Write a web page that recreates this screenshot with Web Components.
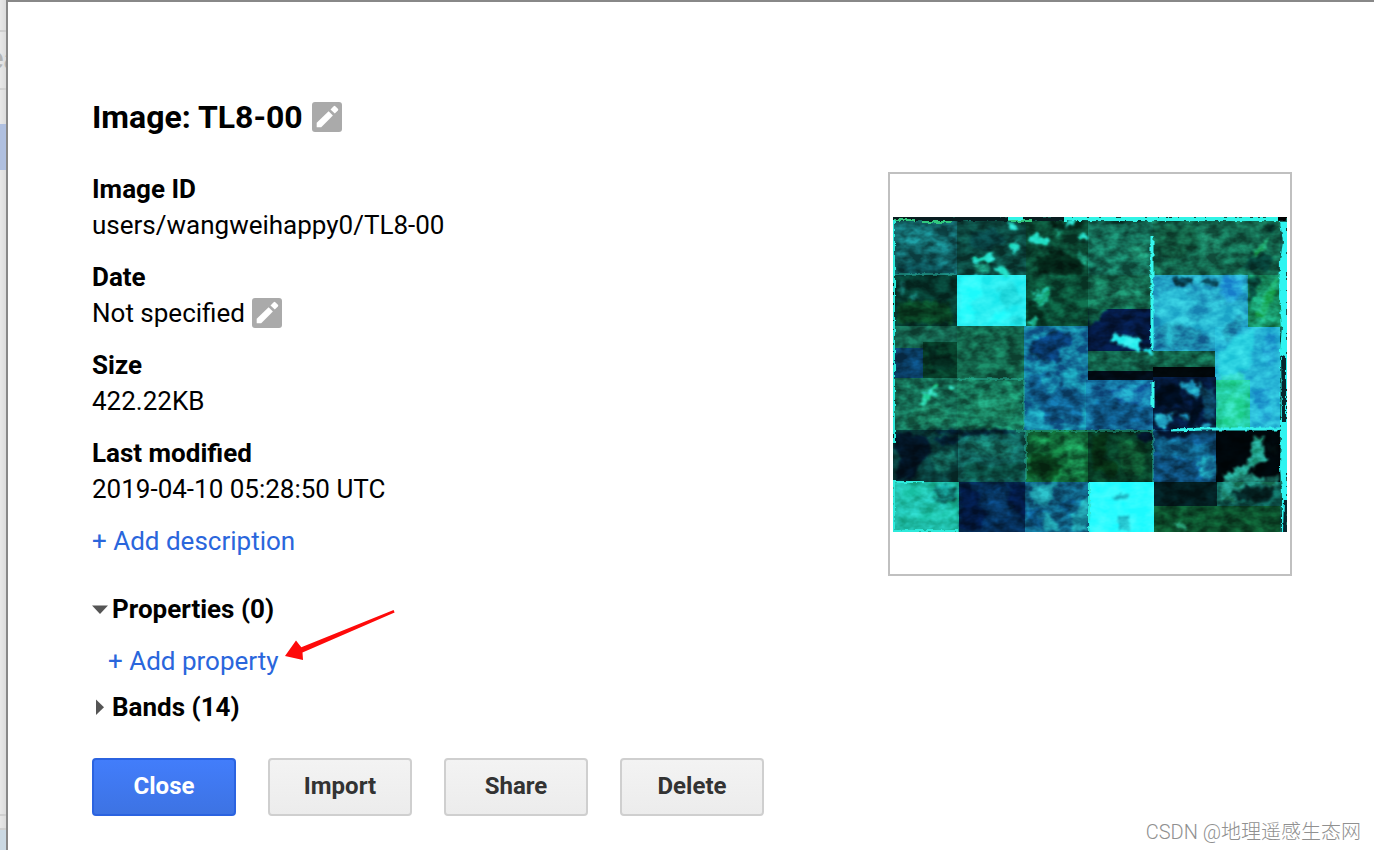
<!DOCTYPE html>
<html lang="en">
<head>
<meta charset="utf-8">
<title>Image: TL8-00</title>
<style>
html, body {
  margin: 0;
  min-height: 100%;
  background: #fff;
}
body {
  font-family: Roboto, "Noto Sans CJK SC", sans-serif;
  font-size: 26px;
  line-height: 36px;
  color: #000;
}
</style>
</head>
<body>
<asset-page>
  <page-backdrop slot="backdrop">ea</page-backdrop>
  <asset-dialog>
    <span slot="title">Image: TL8-00</span>
    <asset-field label="Image ID">users/wangweihappy0/TL8-00</asset-field>
    <asset-field label="Date" editable>Not specified</asset-field>
    <asset-field label="Size">422.22KB</asset-field>
    <asset-field label="Last modified">2019-04-10 05:28:50 UTC</asset-field>
    <add-link>Add description</add-link>
    <tree-section slot="tree" label="Properties (0)" open>
      <add-link>Add property<callout-arrow slot="callout"></callout-arrow></add-link>
    </tree-section>
    <tree-section slot="tree" label="Bands (14)"></tree-section>
    <asset-thumbnail slot="thumbnail"></asset-thumbnail>
    <dialog-button slot="actions" primary>Close</dialog-button>
    <dialog-button slot="actions">Import</dialog-button>
    <dialog-button slot="actions">Share</dialog-button>
    <dialog-button slot="actions">Delete</dialog-button>
  </asset-dialog>
  <page-watermark slot="watermark">CSDN @地理遥感生态网</page-watermark>
</asset-page>

<script>
class BaseElement extends HTMLElement {
  constructor() {
    super()
    const template = document.createElement('template')
    template.innerHTML = this.render()
    this.attachShadow({mode: 'open'})
    this.shadowRoot.appendChild(template.content.cloneNode(true))
  }
}

class AssetPage extends BaseElement {
  render() {
    return /* HTML */`
<style>
:host {
  display: flex;
  position: relative;
  min-height: 100vh;
  overflow: hidden;
}
</style>
<slot name="backdrop"></slot>
<slot></slot>
<slot name="watermark"></slot>`
  }
}

// sliver of the dimmed editor that stays visible left of the dialog
class PageBackdrop extends BaseElement {
  render() {
    return /* HTML */`
<style>
:host {
  display: flex;
  flex-direction: column;
  flex: none;
  width: 6px;
  overflow: hidden;
  background: linear-gradient(90deg, #e8e8e8, #dcdcdc);
  color: #b4b4b4;
  font: bold 32px/52px "Liberation Sans", sans-serif;
}
.bar { height: 30px; border-bottom: 2px solid #cfcfcf; }
.title { height: 56px; margin-left: -14px; border-bottom: 2px solid #d2d2d2; }
.gap { height: 34px; }
.selected { height: 46px; background: #b0c0e0; }
.fill { flex: 1; border-bottom: 2px solid #d0d0d0; }
.foot { height: 12px; }
.status { height: 20px; border-top: 2px solid #d0d0d0; background: #cbd9e3; }
</style>
<div class="bar"></div>
<div class="title"><slot></slot></div>
<div class="gap"></div>
<div class="selected"></div>
<div class="fill"></div>
<div class="foot"></div>
<div class="status"></div>`
  }
}

class AssetDialog extends BaseElement {
  render() {
    return /* HTML */`
<style>
:host {
  display: block;
  flex: 1;
  box-sizing: border-box;
  padding: 93px 82px 32px 84px;
  border: solid #888;
  border-width: 2px 0 0 2px;
  background: #fff;
}
h1 {
  display: flex;
  align-items: center;
  gap: 9px;
  margin: 0 0 32px;
  font-size: 32px;
  line-height: 44px;
}
.main {
  display: flex;
  justify-content: space-between;
  align-items: flex-start;
  gap: 32px;
}
.fields {
  display: flex;
  flex-direction: column;
  align-items: flex-start;
  gap: 16px;
}
.tree {
  display: flex;
  flex-direction: column;
  gap: 10px;
  margin-top: 16px;
}
.actions {
  display: flex;
  gap: 32px;
  margin-top: 33px;
}
</style>
<h1><slot name="title"></slot><edit-button></edit-button></h1>
<div class="main">
  <div class="fields">
    <slot></slot>
    <div class="tree"><slot name="tree"></slot></div>
  </div>
  <slot name="thumbnail"></slot>
</div>
<div class="actions"><slot name="actions"></slot></div>`
  }
}

class EditButton extends BaseElement {
  render() {
    return /* HTML */`
<style>
:host { display: flex; }
button {
  width: 30px;
  height: 30px;
  padding: 0;
  border: none;
  border-radius: 3px;
  background: #aaa;
}
svg { display: block; }
</style>
<button type="button" aria-label="Edit">
  <svg width="30" height="30" viewBox="0 0 30 30" fill="#fff">
    <path d="M4.7 25.2V20.8L16.6 9.2L20.9 13.4L9.2 25.2Z"/>
    <path d="M18.5 7.4L21.7 4.2Q22.5 3.4 23.3 4.2L25.9 6.8Q26.7 7.6 25.9 8.4L22.8 11.6Z"/>
  </svg>
</button>`
  }
}

class AssetField extends BaseElement {
  render() {
    return /* HTML */`
<style>
:host { display: block; }
.label { font-weight: bold; }
.value { display: flex; align-items: center; gap: 7px; }
</style>
<div class="label"></div>
<div class="value"><slot></slot></div>`
  }
  connectedCallback() {
    this.shadowRoot.querySelector('.label').textContent = this.getAttribute('label')
    if (this.hasAttribute('editable')) {
      this.shadowRoot.querySelector('.value').appendChild(document.createElement('edit-button'))
    }
  }
}

class AddLink extends BaseElement {
  render() {
    return /* HTML */`
<style>
:host { display: inline-block; position: relative; }
a { display: block; color: #2a66dc; text-decoration: none; }
</style>
<a href="#">+ <slot></slot></a><slot name="callout"></slot>`
  }
}

class TreeSection extends BaseElement {
  render() {
    return /* HTML */`
<style>
:host { display: block; }
button {
  display: flex;
  align-items: center;
  gap: 4px;
  padding: 0;
  border: none;
  background: none;
  color: inherit;
  font: inherit;
  font-weight: bold;
}
svg { width: 16px; height: 16px; fill: #555; }
.open { display: none; }
:host([open]) .open { display: block; }
:host([open]) .closed { display: none; }
.content { display: none; padding: 16px 0 0 16px; }
:host([open]) .content { display: block; }
</style>
<button type="button">
  <svg class="open" viewBox="0 0 16 16"><path d="M0 4.5H16L8 13Z"/></svg>
  <svg class="closed" viewBox="0 0 16 16"><path d="M4 0.5V16L12 8.2Z"/></svg>
  <span></span>
</button>
<div class="content"><slot></slot></div>`
  }
  connectedCallback() {
    const button = this.shadowRoot.querySelector('button')
    button.querySelector('span').textContent = this.getAttribute('label')
    button.onclick = () => this.toggleAttribute('open')
  }
}

class CalloutArrow extends BaseElement {
  render() {
    return /* HTML */`
<style>
:host {
  position: absolute;
  left: 100%;
  bottom: 18px;
  padding-left: 6px;
  pointer-events: none;
}
svg { display: block; }
</style>
<svg width="110" height="52" viewBox="0 0 110 52" fill="#fe0a0a">
  <path d="M0 47L11 31.5L16.3 38.3L108.6 1L109.6 3.4L17.5 43.4L18 51Z"/>
</svg>`
  }
}

class DialogButton extends BaseElement {
  render() {
    return /* HTML */`
<style>
:host { display: block; }
button {
  box-sizing: border-box;
  min-width: 144px;
  height: 58px;
  padding: 0 16px 2px;
  border: 2px solid #cfcfcf;
  border-radius: 4px;
  background: linear-gradient(#f3f3f3, #ececec);
  color: #333;
  font: bold 24px/36px Roboto, sans-serif;
}
:host([primary]) button {
  border-color: #2b63e0;
  background: linear-gradient(#427dfb, #3d73e3);
  color: #fff;
}
</style>
<button type="button"><slot></slot></button>`
  }
}

// [x, y, width, height, colour] of every field in the scene
const fields = [
  [0, 4, 64, 54, '#126468'], [64, 4, 69, 54, '#0c4a42'], [133, 4, 62, 54, '#0b4a34'],
  [195, 4, 65, 54, '#15705a'], [260, 4, 127, 54, '#14684f'], [0, 58, 64, 51, '#06392f'],
  [64, 58, 69, 51, '#2aeef2'], [133, 58, 62, 51, '#0b5239'], [195, 58, 65, 34, '#146b50'],
  [260, 58, 127, 76, '#25a6c8'], [355, 58, 34, 52, '#179064'], [322, 110, 65, 103, '#29b8d8'],
  [0, 109, 64, 22, '#14604c'], [0, 131, 30, 33, '#0a416b'], [30, 125, 34, 36, '#07402b'],
  [64, 109, 69, 52, '#14694e'], [131, 109, 64, 104, '#1680a4'], [195, 92, 65, 43, '#041942'],
  [195, 134, 65, 22, '#12624b'], [260, 134, 62, 16, '#12664c'], [195, 154, 65, 9, '#010c18'],
  [260, 150, 62, 12, '#01070a'], [0, 161, 64, 52, '#167158'], [64, 161, 67, 52, '#177a5c'],
  [193, 163, 67, 50, '#146d9c'], [260, 160, 63, 53, '#041a3d'], [323, 163, 34, 50, '#24cda0'],
  [0, 213, 65, 52, '#093e3c'], [65, 213, 68, 52, '#11605a'],
  [133, 213, 62, 52, '#116a38'], [195, 213, 65, 52, '#083e27'], [260, 213, 63, 52, '#0d4b76'],
  [323, 213, 64, 52, '#00060a'], [0, 265, 66, 50, '#1ebba6'], [66, 265, 66, 50, '#052c54'],
  [132, 265, 64, 50, '#11668a'], [196, 265, 65, 50, '#2efcff'], [261, 265, 63, 24, '#021d20'],
  [324, 265, 63, 24, '#0e5c53'], [261, 289, 126, 26, '#0c4f2c']
]

// lighter and darker areas inside the fields, [path, colour, opacity]
const patches = [
  ['M5 14L30 9L52 18L58 30L30 27L8 35Z', '#178286', 0.5],
  ['M143 40L168 34L192 46L187 58L145 56ZM134 84L150 94L151 106L134 107ZM155 5H190V12L160 9Z', '#02160d', 0.65],
  ['M5 49Q35 39 62 53V57H4ZM78 18L101 10L113 24L93 34L75 29Z', '#06383f', 0.6],
  ['M4 88Q25 78 58 88L60 106H4Z', '#0b4d20', 0.6],
  ['M115 6L122 7L125 13L119 14ZM134 22L144 14L147 22L156 23L158 28L140 27ZM114 28L123 24L127 32L121 35ZM78 41L92 38L98 34L101 43L96 46L79 45ZM101 48L112 51L119 57L113 61L103 53ZM176 3L185 2L180 8L172 10ZM184 19L193 16L194 25L187 23Z', '#28ebd5', 0.95],
  ['M80 48L96 47L99 54L84 56ZM160 10L170 14L164 20ZM186 33L195 40V49L185 42Z', '#1c9a7c', 0.7],
  ['M140 82L151 73L158 70L154 85L148 90ZM136 106L142 98L147 102L141 108ZM138 74L145 74L140 79Z', '#20c4a0', 0.9],
  ['M67 60H88L91 78L79 85L83 104L67 107ZM95 104L100 95L112 94L120 99L109 106Z', '#30ffff', 0.8],
  ['M104 70L120 66L130 86L112 90ZM118 97L130 100V107H118Z', '#1fd0d4', 0.6],
  ['M5 73L10 63L13 71L7 82ZM17 77L24 75L25 82L18 84Z', '#18817b', 0.7],
  ['M139 125Q157 111 178 118L179 128L164 133L171 146L150 144L137 136Z', '#062c60', 0.85],
  ['M137 158L155 155L170 168L192 178L190 208L168 200L152 205L144 184L134 182Z', '#0e4f82', 0.75],
  ['M148 160L166 158L166 170L155 178ZM134 190L150 196L156 211H134Z', '#22b4cc', 0.6],
  ['M200 187L216 181L257 188V205L201 211Z', '#0b4b7b', 0.65],
  ['M215 170L258 166V190L225 186Z', '#1f96c8', 0.6],
  ['M222 117L237 119L247 123L247 134L232 131L225 125L217 125ZM248 132H260V136H250Z', '#2cf0f0', 1],
  ['M195 90L216 91L204 104L195 110Z', '#116546', 0.9],
  ['M195 50L205 50L204 56L195 55ZM220 2H232V6H220ZM295 28L305 26L304 32ZM282 5L290 10L284 16Z', '#04251f', 0.8],
  ['M200 64L225 70L248 62L255 78L230 86L210 82Z', '#1b8466', 0.5],
  ['M310 8L320 10L330 30L322 50L310 40ZM235 30L255 28L252 44L238 42Z', '#1f8c6c', 0.6],
  ['M265 10L300 8L308 30L280 44L263 34Z', '#0f5238', 0.5],
  ['M279 60H301L301 66L289 70L280 65ZM308 62L326 63L324 70L310 67Z', '#073f50', 0.9],
  ['M265 81L276 72L292 72L300 86L291 100L306 106L315 96L329 87L350 88L347 105L328 122L312 115L301 123L280 127L267 112Z', '#33d3e5', 0.5],
  ['M262 113Q283 96 315 121L318 132H262ZM328 114L349 98L347 113L335 126Z', '#187a9e', 0.65],
  ['M330 60H350V77L339 86L327 76Z', '#25a1dd', 0.8],
  ['M325 138L345 118L362 112L358 150L338 160L326 158Z', '#31e4ea', 0.6],
  ['M372 114L384 118L380 150L370 140ZM360 175L375 170L380 200L366 208Z', '#239fd4', 0.6],
  ['M355 60L368 62L356 90ZM357 38L367 35L380 41L378 54L355 53L349 50ZM373 9L383 8L376 20Z', '#053d36', 0.85],
  ['M362 101L368 83L380 64L386 61L380 84L370 102ZM357 41L369 27L378 16L373 30L361 42Z', '#27c881', 0.75],
  ['M26 187L29 179L44 165L47 167L38 180L33 190ZM56 167L61 168L60 174Z', '#2fe2b8', 0.95],
  ['M10 208Q23 183 50 188L58 206ZM78 180L96 173L124 182L119 204L82 200Z', '#229b74', 0.4],
  ['M34 130L46 128L44 142L58 136L62 150L40 156Z', '#03231d', 0.7],
  ['M2 215L34 219L39 235L25 248L22 262L1 263L8 241L1 230Z', '#010d20', 0.85],
  ['M42 220H64V227L47 229ZM26 213L113 212L123 216L70 219Z', '#01152c', 0.8],
  ['M70 225L98 222L124 228L116 240L84 238ZM38 240L60 230L64 245L46 258Z', '#1a8470', 0.5],
  ['M72 246L100 250L128 244L130 262H70Z', '#063d30', 0.6],
  ['M138 235L157 238L170 250L160 263L136 259ZM199 217L215 217L212 241L227 249L222 261L199 252Z', '#05290f', 0.75],
  ['M172 222L190 217L192 255L178 260ZM143 224L152 220L151 230Z', '#1e9858', 0.6],
  ['M225 225L240 222L254 240L248 260L230 255Z', '#136238', 0.7],
  ['M243 215H260V224H246ZM262 213H297V220H267Z', '#020d26', 0.9],
  ['M262 225L280 220L298 228L319 226L317 240L298 244L288 241L268 240Z', '#137198', 0.6],
  ['M306 242L322 236V262L306 260Z', '#1c90ae', 0.8],
  ['M362 219L371 219L369 233L375 243L360 250L352 258L334 263L330 260L340 252L350 249L358 240Z', '#2bbfa8', 0.9],
  ['M328 268L350 256L372 262L386 258V272L360 266L338 276L345 286L326 284Z', '#26a08c', 0.8],
  ['M340 276L352 268L368 274L380 270L378 284L350 285ZM372 225L384 230V238L374 234Z', '#021315', 0.8],
  ['M286 167L300 164L307 170V180L297 177ZM262 197H273L272 209H263ZM276 196L281 195L274 211H269ZM303 210L316 206L320 210L309 214ZM287 195H297L296 203L288 201Z', '#27b9d6', 0.9],
  ['M299 180L308 181L305 204L295 211L299 194ZM262 168L286 167L291 188L264 191Z', '#000a19', 0.85],
  ['M308 170L322 172V205L310 200Z', '#0f5570', 0.7],
  ['M337 177L355 179L348 208L328 211ZM326 158L350 157L352 164L328 166Z', '#35e6b4', 0.6],
  ['M137 267L162 266L159 272L163 280L153 289L139 287ZM178 300L195 279V314H180ZM143 296L158 296L166 313H154ZM159 267L166 265L163 274Z', '#27b5bb', 0.7],
  ['M136 290L150 292L152 310H136ZM166 286L182 280L176 298Z', '#063c6c', 0.6],
  ['M68 265L88 277L82 288L94 296L87 314H67ZM118 267H132V305L116 286Z', '#01113b', 0.7],
  ['M94 275L112 272L118 300L100 306Z', '#0a4478', 0.6],
  ['M40 268L64 269V281H45ZM39 282L63 278L64 283L49 287Z', '#0b6868', 0.7],
  ['M6 270H34V276L10 284ZM4 298L40 296L64 290V304L30 302Z', '#2ce0cc', 0.6],
  ['M219 278L234 277L234 283H220ZM225 298L235 298L236 313H226Z', '#1d9fb0', 0.7],
  ['M278 307L286 305L296 314L287 312Z', '#31b68d', 0.9]
]

class AssetThumbnail extends BaseElement {
  render() {
    return /* HTML */`
<style>
:host {
  display: flex;
  align-items: center;
  flex: none;
  box-sizing: border-box;
  width: 404px;
  aspect-ratio: 1;
  padding: 3px;
  margin-top: 1px;
  border: 2px solid #c0c0c0;
}
svg { display: block; width: 100%; height: auto; isolation: isolate; }
filter { color-interpolation-filters: sRGB; }
.grain { mix-blend-mode: overlay; }
</style>
<svg viewBox="0 0 394 315" role="img" aria-label="Satellite scene">
  <defs>
    <filter id="rough" filterUnits="userSpaceOnUse" x="0" y="0" width="394" height="315">
      <feTurbulence type="fractalNoise" baseFrequency="0.16" numOctaves="2" seed="4"/>
      <feDisplacementMap in="SourceGraphic" scale="9" xChannelSelector="R" yChannelSelector="G"/>
      <feGaussianBlur stdDeviation="1.2"/>
    </filter>
    <filter id="soft" filterUnits="userSpaceOnUse" x="0" y="0" width="394" height="315">
      <feGaussianBlur stdDeviation="0.7"/>
    </filter>
    <filter id="edge" filterUnits="userSpaceOnUse" x="0" y="0" width="394" height="315">
      <feTurbulence type="fractalNoise" baseFrequency="0.2" numOctaves="2" seed="7"/>
      <feDisplacementMap in="SourceGraphic" scale="4" xChannelSelector="R" yChannelSelector="G"/>
      <feGaussianBlur stdDeviation="0.6"/>
    </filter>
    <filter id="grain" x="0" y="0" width="100%" height="100%">
      <feTurbulence type="fractalNoise" baseFrequency="0.07 0.11" numOctaves="3" seed="9"/>
      <feColorMatrix values="2 0 0 0 -0.55  2 0 0 0 -0.55  2 0 0 0 -0.55  0 0 0 0 1"/>
    </filter>
  </defs>
  <rect width="394" height="315" fill="#0f5a50"/>
  <g filter="url(#soft)">${fields.map(([x, y, w, h, c]) =>
    `<rect x="${x}" y="${y}" width="${w}" height="${h}" fill="${c}"/>`).join('')}
  </g>
  <g filter="url(#rough)">${patches.map(([d, c, o]) =>
    `<path d="${d}" fill="${c}" opacity="${o}"/>`).join('')}
  </g>
  <rect class="grain" width="394" height="315" filter="url(#grain)" opacity="0.4"/>
  <g filter="url(#edge)">
    <path d="M0 0H394V4H0Z" fill="#081d20"/>
    <path d="M1 3H22M29 5H59M115 4H139" stroke="#30c77e" stroke-width="2"/>
    <path d="M115 1H130M171 2H386" stroke="#31f4e6" stroke-width="4"/>
    <path d="M386 1H394" stroke="#000" stroke-width="4"/>
    <path d="M387 5H394V315H389V275L387 250L388 215L387 133L389 110L386 80L387 44L390 25Z" fill="#2ff4f1"/>
    <path d="M388 137L393 139V205H389ZM391 282H394V315H390Z" fill="#08272e"/>
    <path d="M259 19V133M260 165V191" stroke="#35f7ef" stroke-width="3"/>
    <path d="M131 163V212M0 57H63M64 162H130M260 212V265M133 213V264" stroke="#26ad96" stroke-width="1"/>
    <path d="M124 214H260" stroke="#25a98e" stroke-width="1"/>
    <path d="M278 213L310 212H391" fill="none" stroke="#34f2ed" stroke-width="3"/>
    <path d="M1 3V225M1 265V315M0 314H65M0 265H31M196 266V314" stroke="#2deadb" stroke-width="2"/>
  </g>
</svg>`
  }
}

class PageWatermark extends BaseElement {
  render() {
    return /* HTML */`
<style>
:host {
  position: absolute;
  right: 13px;
  bottom: 4px;
  color: #909090;
  font-size: 20px;
  line-height: 28px;
  font-weight: 300;
}
</style>
<slot></slot>`
  }
}

window.customElements.define('asset-page', AssetPage)
window.customElements.define('page-backdrop', PageBackdrop)
window.customElements.define('edit-button', EditButton)
window.customElements.define('asset-dialog', AssetDialog)
window.customElements.define('asset-field', AssetField)
window.customElements.define('add-link', AddLink)
window.customElements.define('tree-section', TreeSection)
window.customElements.define('callout-arrow', CalloutArrow)
window.customElements.define('dialog-button', DialogButton)
window.customElements.define('asset-thumbnail', AssetThumbnail)
window.customElements.define('page-watermark', PageWatermark)
</script>
</body>
</html>
